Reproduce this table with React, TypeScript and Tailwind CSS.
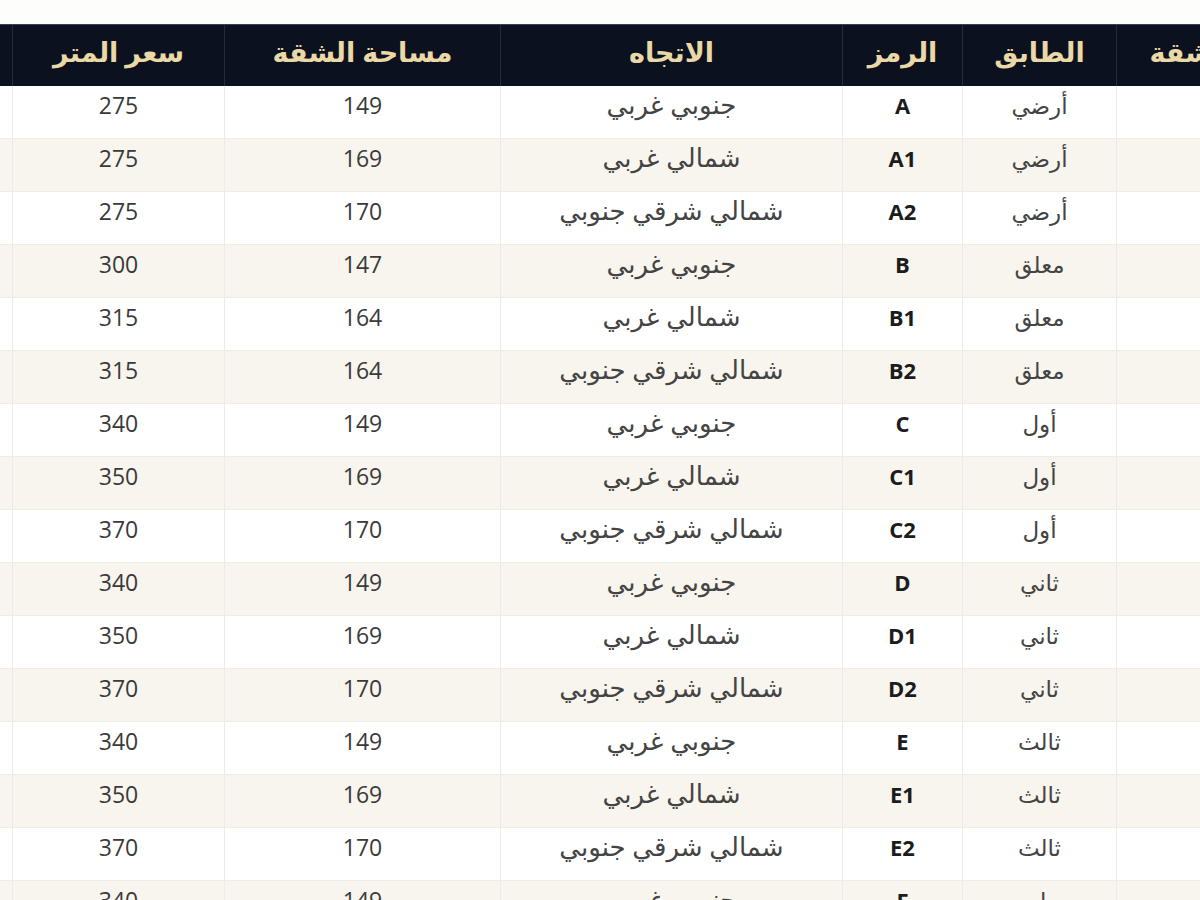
import React from 'react';

type Row = { price: string; area: string; dir: string; code: string; floor: string };

const rows: Row[] = [
  { price: '275', area: '149', dir: 'جنوبي غربي', code: 'A', floor: 'أرضي' },
  { price: '275', area: '169', dir: 'شمالي غربي', code: 'A1', floor: 'أرضي' },
  { price: '275', area: '170', dir: 'شمالي شرقي جنوبي', code: 'A2', floor: 'أرضي' },
  { price: '300', area: '147', dir: 'جنوبي غربي', code: 'B', floor: 'معلق' },
  { price: '315', area: '164', dir: 'شمالي غربي', code: 'B1', floor: 'معلق' },
  { price: '315', area: '164', dir: 'شمالي شرقي جنوبي', code: 'B2', floor: 'معلق' },
  { price: '340', area: '149', dir: 'جنوبي غربي', code: 'C', floor: 'أول' },
  { price: '350', area: '169', dir: 'شمالي غربي', code: 'C1', floor: 'أول' },
  { price: '370', area: '170', dir: 'شمالي شرقي جنوبي', code: 'C2', floor: 'أول' },
  { price: '340', area: '149', dir: 'جنوبي غربي', code: 'D', floor: 'ثاني' },
  { price: '350', area: '169', dir: 'شمالي غربي', code: 'D1', floor: 'ثاني' },
  { price: '370', area: '170', dir: 'شمالي شرقي جنوبي', code: 'D2', floor: 'ثاني' },
  { price: '340', area: '149', dir: 'جنوبي غربي', code: 'E', floor: 'ثالث' },
  { price: '350', area: '169', dir: 'شمالي غربي', code: 'E1', floor: 'ثالث' },
  { price: '370', area: '170', dir: 'شمالي شرقي جنوبي', code: 'E2', floor: 'ثالث' },
  { price: '340', area: '149', dir: 'جنوبي غربي', code: 'F', floor: 'رابع' },
];

const headers = ['رقم الشقة', 'الطابق', 'الرمز', 'الاتجاه', 'مساحة الشقة', 'سعر المتر', 'السعر الإجمالي'];

const grid = 'grid grid-cols-[210px_154px_120px_342px_276px_212px_320px]';

function App() {
  return (
    <div
      dir="rtl"
      className="w-[1200px] h-[900px] overflow-hidden bg-[#fdfdfc]"
      style={{ fontFamily: '"Open Sans", "DejaVu Sans", sans-serif' }}
    >
      <div className="h-[24px]" />
      <div className="w-[1634px] -mr-[126px]">
        <div className={`${grid} h-[62px] overflow-hidden bg-[#0c1120] border-t border-[#3a3f4a]`}>
          {headers.map((h) => (
            <div
              key={h}
              className="flex items-center justify-center pb-[8px] whitespace-nowrap border-l border-[#262c3a] text-[27px] leading-[36px] font-bold text-[#ead9a6]"
            >
              {h}
            </div>
          ))}
        </div>

        {rows.map((r, i) => (
          <div
            key={r.code}
            className={`${grid} h-[53px] ${i % 2 === 0 ? 'bg-white' : 'bg-[#f8f5ee]'} border-b border-[#efede8]`}
          >
            <div className="border-l border-[#ebebeb]" />
            <div className="pt-[2px] text-center text-[23px] leading-[34px] text-[#444] border-l border-[#ebebeb]">
              {r.floor}
            </div>
            <div className="pt-[3px] text-center text-[22px] leading-[32px] font-bold text-[#1c1c1c] border-l border-[#ebebeb]">
              {r.code}
            </div>
            <div className="pt-[0px] text-center text-[26px] leading-[36px] text-[#444] border-l border-[#ebebeb]">
              {r.dir}
            </div>
            <div className="pt-[3px] text-center text-[23px] leading-[32px] text-[#3a3a3a] border-l border-[#ebebeb]">
              {r.area}
            </div>
            <div className="pt-[3px] text-center text-[23px] leading-[32px] text-[#3a3a3a] border-l border-[#ebebeb]">
              {r.price}
            </div>
            <div />
          </div>
        ))}
      </div>
    </div>
  );
}

export default App;
